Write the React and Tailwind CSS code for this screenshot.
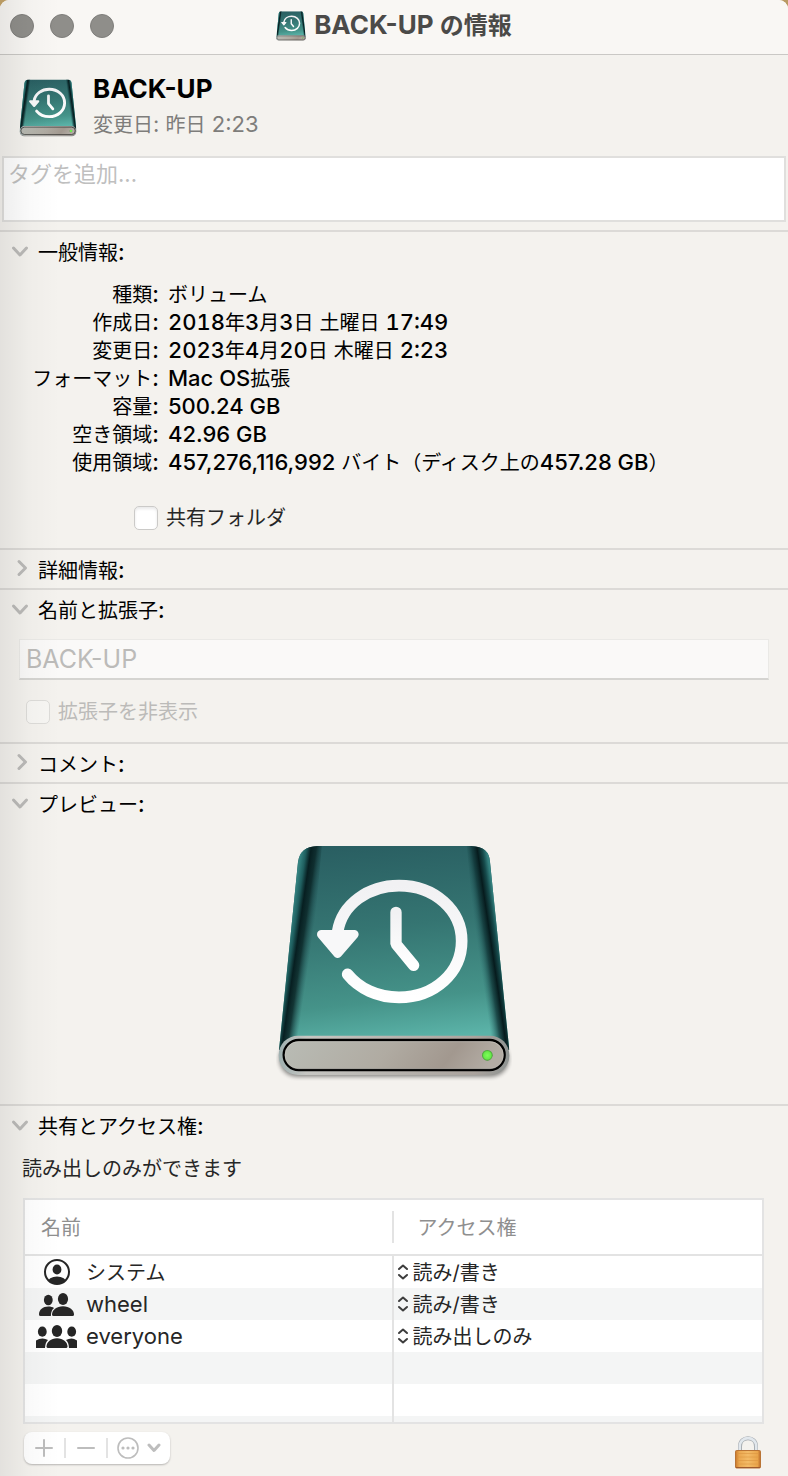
import { useId, useState } from "react";

function DriveIcon({ className }) {
  const id = useId();
  const ref = (name) => `url(#${id}${name})`;
  return (
    <svg viewBox="48 36 708 720" className={className} aria-hidden="true">
      <defs>
        <linearGradient id={`${id}body`} x1="0" y1="0" x2="0.12" y2="1">
          <stop offset="0" stopColor="#285c60" />
          <stop offset="0.45" stopColor="#357572" />
          <stop offset="0.8" stopColor="#459389" />
          <stop offset="1" stopColor="#5bb3a8" />
        </linearGradient>
        <linearGradient id={`${id}left`} gradientUnits="userSpaceOnUse" x1="84" y1="330" x2="156" y2="334">
          <stop offset="0" stopColor="#348280" />
          <stop offset="0.2" stopColor="#1f5f5f" />
          <stop offset="0.4" stopColor="#071f21" />
          <stop offset="0.62" stopColor="#0a2526" stopOpacity="0.85" />
          <stop offset="1" stopColor="#1d5053" stopOpacity="0" />
        </linearGradient>
        <linearGradient id={`${id}right`} gradientUnits="userSpaceOnUse" x1="720" y1="330" x2="650" y2="334">
          <stop offset="0" stopColor="#348280" />
          <stop offset="0.18" stopColor="#164a4b" />
          <stop offset="0.4" stopColor="#061b1d" />
          <stop offset="0.62" stopColor="#0f3436" stopOpacity="0.8" />
          <stop offset="1" stopColor="#2b6c6c" stopOpacity="0" />
        </linearGradient>
        <linearGradient id={`${id}rim`} x1="0" y1="0" x2="1" y2="0">
          <stop offset="0" stopColor="#9fb0b0" />
          <stop offset="0.12" stopColor="#c6c6c2" />
          <stop offset="0.85" stopColor="#aaa39d" />
          <stop offset="1" stopColor="#8f9492" />
        </linearGradient>
        <linearGradient id={`${id}face`} x1="0" y1="0" x2="1" y2="0.1">
          <stop offset="0" stopColor="#b9bcb5" />
          <stop offset="0.5" stopColor="#b0aba2" />
          <stop offset="0.8" stopColor="#a2988f" />
          <stop offset="1" stopColor="#b3aca4" />
        </linearGradient>
        <linearGradient id={`${id}mark`} x1="0" y1="0" x2="0" y2="1">
          <stop offset="0" stopColor="#f1f1f3" />
          <stop offset="1" stopColor="#ffffff" />
        </linearGradient>
        <radialGradient id={`${id}led`}>
          <stop offset="0" stopColor="#7dff58" />
          <stop offset="0.7" stopColor="#68e94a" />
          <stop offset="1" stopColor="#3f9a31" />
        </radialGradient>
        <filter id={`${id}shadow`} x="-10%" y="-20%" width="120%" height="150%">
          <feGaussianBlur stdDeviation="6" />
        </filter>
        <clipPath id={`${id}clip`}>
          <path d="M172 48H634Q688 50 690 96L748 660H57L114 96Q120 50 172 48Z" />
        </clipPath>
      </defs>
      <rect x="58" y="634" width="688" height="106" rx="52" fill="#000" opacity="0.45" filter={ref("shadow")} />
      <g clipPath={ref("clip")}>
        <rect x="50" y="40" width="705" height="625" fill={ref("body")} />
        <g transform="translate(30 0) skewX(-5.2)">
          <rect x="70" y="40" width="90" height="630" fill={ref("left")} />
        </g>
        <g transform="translate(-30 0) skewX(5.2)">
          <rect x="646" y="40" width="90" height="630" fill={ref("right")} />
        </g>
      </g>
      <rect x="56" y="617" width="692" height="118" rx="58" fill={ref("rim")} />
      <rect x="71" y="630" width="663" height="90" rx="45" fill={ref("face")} stroke="#000" strokeWidth="7" />
      <rect x="75" y="635" width="655" height="81" rx="40" fill="none" stroke="#d3d1cb" strokeWidth="2" opacity="0.7" />
      <circle cx="682" cy="676" r="16" fill={ref("led")} />
      <g fill="none" stroke={ref("mark")} strokeLinecap="round" strokeLinejoin="round">
        <path strokeWidth="35" d="M233 305C246 223 325 167 417 167C525 167 605 242 605 333C605 427 525 502 417 502C352 502 297 475 263 433" />
        <path strokeWidth="34" strokeLinejoin="bevel" d="M408 247V342L461 406" />
      </g>
      <path d="M184 313H283L233 371Z" fill="#f8f8f9" stroke="#f8f8f9" strokeWidth="26" strokeLinejoin="round" />
    </svg>
  );
}

// Sets runs of Latin letters and digits slightly larger than the Japanese around them.
function Mixed({ text, latin = "text-[22px]" }) {
  return text.split(/([\x20-\x7e]+)/).map((part, i) =>
    i % 2 ? (
      <span key={i} className={`${latin} leading-none`}>
        {part}
      </span>
    ) : (
      part
    ),
  );
}

function Section({ title, defaultOpen = false, children }) {
  const [open, setOpen] = useState(defaultOpen);
  return (
    <section className="border-t-2 border-[#dcdad7]">
      <h2>
        <button
          type="button"
          aria-expanded={open}
          onClick={() => setOpen(!open)}
          className="flex h-[38px] w-full items-center gap-2 pl-[10px] text-left text-black"
        >
          <svg
            viewBox="0 0 20 20"
            className="size-5 fill-none stroke-[#bbbab8] stroke-3"
            strokeLinecap="round"
            strokeLinejoin="round"
            aria-hidden="true"
          >
            <path d={open ? "M3.500 7L10 14L16.500 7" : "M9 2.500L15.500 9L9 15.500"} />
          </svg>
          <span className="pt-1">
            <Mixed text={title} latin="text-[22px] font-medium" />
          </span>
        </button>
      </h2>
      {open && children}
    </section>
  );
}

function Detail({ label, value, latin = "text-[22px] font-medium" }) {
  return (
    <>
      <dt className="text-right">
        <Mixed text={`${label}:`} latin="text-[22px] font-medium" />
      </dt>
      <dd>
        <Mixed text={value} latin={latin} />
      </dd>
    </>
  );
}

function PersonIcon() {
  return (
    <svg viewBox="0 0 42 28" className="h-7 w-[42px] fill-[#262626]" aria-hidden="true">
      <defs>
        <clipPath id="person-ring">
          <circle cx="21" cy="14" r="12" />
        </clipPath>
      </defs>
      <circle cx="21" cy="14" r="12" fill="none" stroke="#262626" strokeWidth="2" />
      <ellipse cx="21" cy="11.500" rx="4.400" ry="5" />
      <ellipse cx="21" cy="24.500" rx="9.500" ry="6" clipPath="url(#person-ring)" />
    </svg>
  );
}

function PairIcon() {
  return (
    <svg viewBox="0 0 42 28" className="h-7 w-[42px] fill-[#262626]" aria-hidden="true">
      <ellipse cx="12.300" cy="10" rx="4.400" ry="5.200" />
      <path d="M3 24.500C3 19.500 7 16.500 12.300 16.500C14.700 16.500 16.700 17 18 18C16.300 19.700 15 21.500 14.900 26H4.500Q3 26 3 24.500Z" />
      <ellipse cx="27" cy="9" rx="5.100" ry="5.900" />
      <path d="M16 24.500C16 20 20.500 16.200 27 16.200C33.500 16.200 38 20 38 24.500Q38 26 36.500 26H17.500Q16 26 16 24.500Z" />
    </svg>
  );
}

function GroupIcon() {
  return (
    <svg viewBox="0 0 42 28" className="h-7 w-[42px] fill-[#262626]" aria-hidden="true">
      <ellipse cx="6.300" cy="9.700" rx="4.400" ry="5.100" />
      <ellipse cx="35.700" cy="9.700" rx="4.400" ry="5.100" />
      <path d="M0 18.500Q3 16.500 6.500 16.500Q9.500 16.500 12 18Q9.200 20.500 9 26H0Z" />
      <path d="M41 18.500Q38 16.500 35.500 16.500Q32.500 16.500 30 18Q32.800 20.500 33 26H41Z" />
      <ellipse cx="21" cy="9" rx="5.200" ry="5.900" />
      <path d="M10.500 24.500C10.500 20 15 16.200 21 16.200C27 16.200 31.500 20 31.500 24.500Q31.500 26 30 26H12Q10.500 26 10.500 24.500Z" />
    </svg>
  );
}

function Lock() {
  return (
    <svg viewBox="0 0 28 34" className="h-[34px] w-7" aria-hidden="true">
      <defs>
        <linearGradient id="lock-body" x1="0" y1="0" x2="1" y2="0">
          <stop offset="0" stopColor="#c9792a" />
          <stop offset="0.15" stopColor="#eba850" />
          <stop offset="0.5" stopColor="#f3bb67" />
          <stop offset="0.88" stopColor="#eaa54b" />
          <stop offset="1" stopColor="#bb6c2a" />
        </linearGradient>
      </defs>
      <path d="M6 17V11.500C6 0.500 22 0.500 22 11.500V17" fill="none" stroke="#a3a9ae" strokeWidth="4" />
      <path d="M5.800 17V11.500C5.800 0.300 22.200 0.300 22.200 11.500V17" fill="none" stroke="#e1e7ec" strokeWidth="2.600" />
      <rect x="1.500" y="15.500" width="25" height="17.500" rx="1" fill="url(#lock-body)" stroke="#b97435" />
      <path d="M3 18.500H25M3 22H25M3 25.500H25M3 29H25" stroke="#dc9641" opacity="0.6" />
      <path d="M2 32.500H26" stroke="#a05a2c" />
    </svg>
  );
}

const members = [
  { name: "システム", access: "読み/書き", Icon: PersonIcon },
  { name: "wheel", access: "読み/書き", Icon: PairIcon },
  { name: "everyone", access: "読み出しのみ", Icon: GroupIcon },
];

const dateStyle = "text-[22px] font-medium tabular-nums";

const checkbox =
  "size-6 shrink-0 appearance-none rounded-[5px] border border-[#cbcac8] bg-white shadow-[inset_0_2px_3px_rgba(0,0,0,0.09)] checked:bg-blue-500 disabled:border-[#dddcd9] disabled:bg-[#f7f6f3] disabled:shadow-none";

export default function App() {
  return (
    <div className="min-h-screen bg-[#b99a63] font-['Inter','Noto_Sans_CJK_JP',sans-serif] text-[20px] leading-7 text-[#262626]">
      <main className="relative min-h-screen overflow-hidden rounded-t-[9px] bg-[#f4f2ee]">
        <header className="flex h-[55px] items-center border-b border-[#cac8c5] bg-[#f9f7f4] px-[10px] pb-[2px]">
          <div className="flex flex-1 gap-4">
            {["閉じる", "しまう", "拡大"].map((label) => (
              <button
                key={label}
                type="button"
                aria-label={label}
                className="size-6 rounded-full border border-[#7f7e7b] bg-[#8f8e8a]"
              />
            ))}
          </div>
          <h1 className="flex items-center gap-2 text-[24px] font-bold text-[#4b4a48]">
            <DriveIcon className="h-8 w-[30px]" />
            <span>
              <Mixed text="BACK-UP の情報" latin="text-[26px]" />
            </span>
          </h1>
          <div className="flex-1" />
        </header>

        <div className="flex items-center gap-4 pt-4 pl-[19px]">
          <DriveIcon className="h-[62px] w-[58px]" />
          <div className="pb-[2px]">
            <p className="text-[26px] leading-9 font-bold text-black">BACK-UP</p>
            <p className="leading-9 text-[#7e7d7b]">
              <Mixed text="変更日: 昨日 2:23" />
            </p>
          </div>
        </div>

        <div className="px-[2px] pt-[11px] pb-2">
          <textarea
            aria-label="タグを追加"
            placeholder="タグを追加..."
            className="block h-[66px] w-full resize-none border-2 border-[#e0dfdd] bg-white px-1 py-0 text-[22px] leading-8 outline-none placeholder:text-[#bfbfbf]"
          />
        </div>

        <Section title="一般情報:" defaultOpen>
          <dl className="grid grid-cols-[159px_1fr] gap-x-[9px] pt-[11px] text-black">
            <Detail label="種類" value="ボリューム" />
            <Detail label="作成日" value="2018年3月3日 土曜日 17:49" latin={dateStyle} />
            <Detail label="変更日" value="2023年4月20日 木曜日 2:23" latin={dateStyle} />
            <Detail label="フォーマット" value="Mac OS拡張" />
            <Detail label="容量" value="500.24 GB" />
            <Detail label="空き領域" value="42.96 GB" />
            <Detail label="使用領域" value="457,276,116,992 バイト（ディスク上の457.28 GB）" />
          </dl>
          <label className="flex items-center gap-2 pt-[27px] pb-4 pl-[134px]">
            <input type="checkbox" className={checkbox} />
            共有フォルダ
          </label>
        </Section>

        <Section title="詳細情報:" />

        <Section title="名前と拡張子:" defaultOpen>
          <div className="px-[19px] pt-[11px]">
            <input
              type="text"
              disabled
              aria-label="名前"
              defaultValue="BACK-UP"
              className="block h-[41px] w-full border border-b-2 border-[#eae9e6] border-b-[#d5d4d1] bg-[#faf9f8] px-[6px] text-[25px] text-[#bcbbb9]"
            />
          </div>
          <label className="flex items-center gap-2 pt-[18px] pb-4 pl-[26px] text-[#bcbbb9]">
            <input type="checkbox" disabled className={checkbox} />
            拡張子を非表示
          </label>
        </Section>

        <Section title="コメント:">
          <textarea aria-label="コメント" className="mx-5 mb-4 h-24 w-[95%] bg-white" />
        </Section>

        <Section title="プレビュー:" defaultOpen>
          <div className="flex justify-center pt-5 pb-[22px]">
            <DriveIcon className="h-[240px] w-[236px]" />
          </div>
        </Section>

        <Section title="共有とアクセス権:" defaultOpen>
          <p className="pt-[11px] pl-[22px]">読み出しのみができます</p>
          <div className="mt-[15px] mr-6 ml-[23px] h-[226px] overflow-hidden border-2 border-[#e3e3e3] bg-white">
            <table className="w-full table-fixed border-separate border-spacing-0 text-left">
              <thead>
                <tr className="text-[#8f8f8f]">
                  <th className="h-14 w-[calc(50%-1px)] border-b-2 border-[#e3e3e3] p-0 font-normal">
                    <div className="flex h-8 items-center border-r-2 border-[#e3e3e3] pt-[2px] pl-4">名前</div>
                  </th>
                  <th className="h-14 border-b-2 border-[#e3e3e3] p-0 pt-[2px] pl-6 font-normal">アクセス権</th>
                </tr>
              </thead>
              <tbody>
                {members.map(({ name, access, Icon }) => (
                  <tr key={name} className="even:bg-[#f4f5f5]">
                    <td className="h-8 border-r-2 border-[#e3e3e3] p-0">
                      <div className="flex items-center gap-2 pl-[11px]">
                        <Icon />
                        <span className="pt-[2px]">
                          <Mixed text={name} />
                        </span>
                      </div>
                    </td>
                    <td className="h-8 p-0">
                      <label className="flex items-center gap-1 pl-[3px]">
                        <svg
                          viewBox="0 0 12 18"
                          className="h-[18px] w-3 fill-none stroke-[#3d3d3d] stroke-2"
                          strokeLinecap="round"
                          strokeLinejoin="round"
                          aria-hidden="true"
                        >
                          <path d="M2 6L6 2.500L10 6M2 12L6 15.500L10 12" />
                        </svg>
                        <select
                          aria-label={`${name} アクセス権`}
                          defaultValue={access}
                          className="h-[30px] appearance-none bg-transparent pt-[2px] leading-7"
                        >
                          <option>{access}</option>
                        </select>
                      </label>
                    </td>
                  </tr>
                ))}
                {[0, 1, 2].map((row) => (
                  <tr key={row} className="even:bg-[#f4f5f5]">
                    <td className="h-8 border-r-2 border-[#e3e3e3] p-0" />
                    <td className="h-8 p-0" />
                  </tr>
                ))}
              </tbody>
            </table>
          </div>
          <div className="flex items-start justify-between pt-2 pr-[26px] pb-1 pl-6">
            <div className="flex h-8 items-center rounded-lg bg-white text-[#bdbdbd] shadow-[0_1px_2px_rgba(0,0,0,0.25)]">
              <button type="button" aria-label="追加" className="flex w-10 justify-center">
                <svg viewBox="0 0 20 20" className="size-5 stroke-current stroke-2" strokeLinecap="round" aria-hidden="true">
                  <path d="M2 10H18M10 2V18" />
                </svg>
              </button>
              <span className="h-5 w-[2px] bg-[#e3e3e3]" />
              <button type="button" aria-label="削除" className="flex w-10 justify-center">
                <svg viewBox="0 0 20 20" className="size-5 stroke-current stroke-2" strokeLinecap="round" aria-hidden="true">
                  <path d="M2 10H18" />
                </svg>
              </button>
              <span className="h-5 w-[2px] bg-[#e3e3e3]" />
              <button type="button" aria-label="その他" className="flex w-[62px] items-center justify-center gap-2">
                <svg viewBox="0 0 22 22" className="size-[22px] fill-current" aria-hidden="true">
                  <circle cx="11" cy="11" r="10" fill="none" stroke="currentColor" strokeWidth="1.600" />
                  <circle cx="6" cy="11" r="1.600" />
                  <circle cx="11" cy="11" r="1.600" />
                  <circle cx="16" cy="11" r="1.600" />
                </svg>
                <svg
                  viewBox="0 0 14 10"
                  className="h-[10px] w-[14px] fill-none stroke-current stroke-3"
                  strokeLinecap="round"
                  strokeLinejoin="round"
                  aria-hidden="true"
                >
                  <path d="M2 2L7 7.500L12 2" />
                </svg>
              </button>
            </div>
            <button type="button" aria-label="ロック" className="pt-[3px]">
              <Lock />
            </button>
          </div>
        </Section>
        <div className="pointer-events-none absolute inset-y-0 left-0 w-[60px] bg-linear-to-r from-black/7 via-black/2 to-transparent" />
      </main>
    </div>
  );
}
